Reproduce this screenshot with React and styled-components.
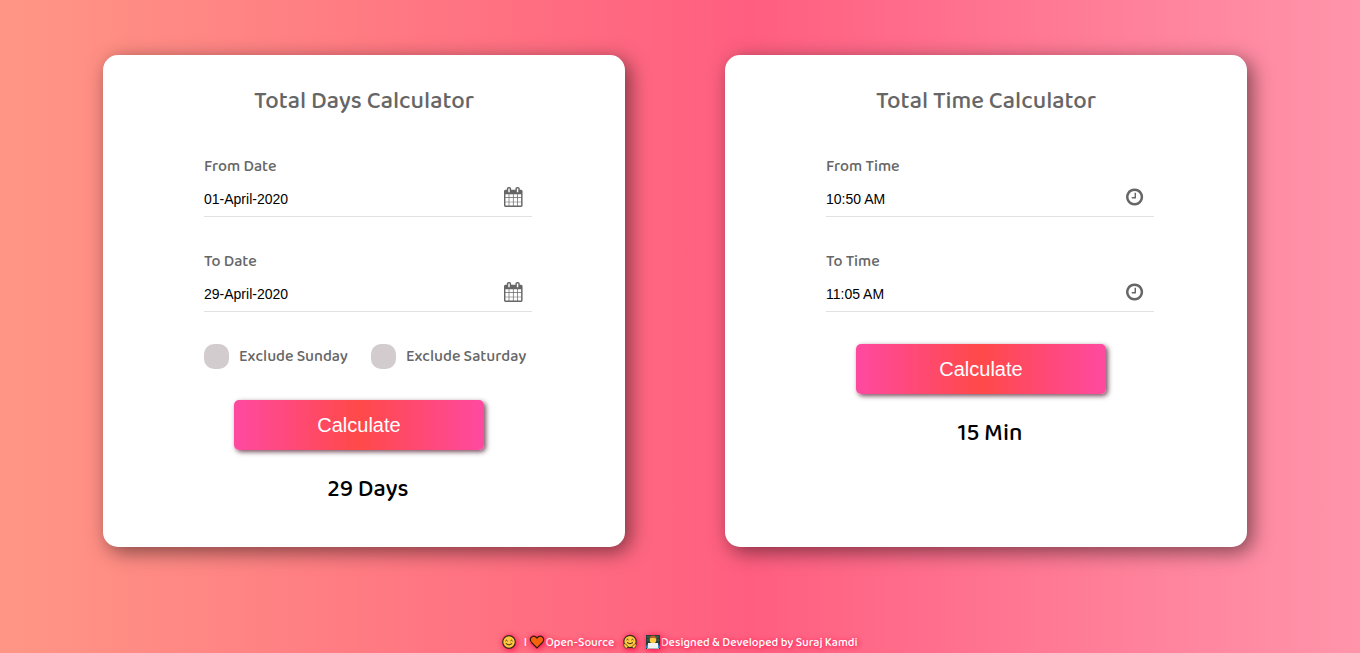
import React, { useState } from "react";
import styled, { createGlobalStyle } from "styled-components";

const GlobalStyle = createGlobalStyle`
  * { box-sizing: border-box; }
  body {
    margin: 0;
    background: linear-gradient(to right, #ff9685, #ff5e80 55%, #ff95aa);
    font-family: "Baloo 2", "Noto Sans", sans-serif;
    font-weight: 500;
    color: #666;
  }
`;

const Page = styled.div`
  display: flex;
  flex-direction: column;
  min-height: 100vh;
  padding: 55px 10px 0 0;
`;

const Cards = styled.main`
  display: flex;
  justify-content: center;
  gap: 100px;
`;

const Card = styled.section`
  flex: 0 1 522px;
  min-height: 492px;
  padding: 30px 0;
  border-radius: 15px;
  background: #fff;
  box-shadow: 5px 5px 20px rgba(0, 0, 0, 0.5);
`;

const Title = styled.h1`
  margin: 0 0 38px;
  font-size: 24px;
  font-weight: 500;
  line-height: 34px;
  text-align: center;
`;

const Form = styled.form`
  width: 336px;
  max-width: 100%;
  margin: 0 auto;
  padding-left: 8px;
`;

const Fields = styled.div`
  display: flex;
  flex-direction: column;
  gap: 35px;
  margin-bottom: 32px;
`;

const Field = styled.div`
  display: flex;
  flex-direction: column;
`;

const Label = styled.label`
  font-size: 16px;
  line-height: 20px;
`;

const InputRow = styled.div`
  display: flex;
  align-items: center;
  height: 40px;
  padding: 0 9px 0 0;
  border-bottom: 1px solid #e1e1e1;
`;

const TextInput = styled.input`
  flex: 1;
  min-width: 0;
  padding: 4px 0 0;
  border: 0;
  outline: 0;
  background: none;
  color: #000;
  font: 14px "Liberation Sans", Arial, sans-serif;
`;

const Icon = styled.svg`
  height: 20px;
  fill: #666;
`;

const Checks = styled.div`
  display: flex;
  gap: 23px;
  margin-bottom: 31px;
`;

const CheckLabel = styled.label`
  display: flex;
  align-items: center;
  gap: 10px;
  font-size: 16px;
  line-height: 25px;
  white-space: nowrap;
`;

const CheckBox = styled.input`
  appearance: none;
  width: 25px;
  height: 25px;
  margin: 0;
  border-radius: 10px;
  background: #d3cccf;
  &:checked { background: #ff4b8b; }
`;

const Button = styled.button`
  display: block;
  width: 250px;
  height: 50px;
  margin: 0 0 22px 30px;
  padding: 0;
  border: 0;
  border-radius: 5px;
  background: linear-gradient(to right, #ff49a1, #ff4949, #ff49a1);
  box-shadow: 2px 2px 5px rgba(60, 0, 20, 0.7);
  color: #fff;
  font: 20px "Liberation Sans", Arial, sans-serif;
`;

const Result = styled.output`
  display: block;
  color: #000;
  font-size: 24px;
  line-height: 36px;
  text-align: center;
`;

const Footer = styled.footer`
  display: flex;
  justify-content: center;
  align-items: center;
  height: 22px;
  margin-top: auto;
  padding-left: 8px;
  color: #fff;
  font-size: 12px;
  text-shadow: 1px 1px 5px #f04;
  white-space: pre;
`;

const Emoji = styled.svg`
  width: 16px;
  height: 16px;
  filter: drop-shadow(1px 1px 3px #f04);
`;

const Calendar = () => (
  <Icon viewBox="0 0 1664 1792" aria-hidden="true">
    <path d="M128 1664h288v-288h-288v288zM480 1664h320v-288h-320v288zM128 1312h288v-320h-288v320zM480 1312h320v-320h-320v320zM128 928h288v-288h-288v288zM864 1664h320v-288h-320v288zM480 928h320v-288h-320v288zM1248 1664h288v-288h-288v288zM864 1312h320v-320h-320v320zM512 448v-288q0-13-9.5-22.5t-22.5-9.5h-64q-13 0-22.5 9.5t-9.5 22.5v288q0 13 9.5 22.5t22.5 9.5h64q13 0 22.5-9.5t9.5-22.5zM1248 1312h288v-320h-288v320zM864 928h320v-288h-320v288zM1248 928h288v-288h-288v288zM1280 448v-288q0-13-9.5-22.5t-22.5-9.5h-64q-13 0-22.5 9.5t-9.5 22.5v288q0 13 9.5 22.5t22.5 9.5h64q13 0 22.5-9.5t9.5-22.5zM1664 384v1280q0 52-38 90t-90 38h-1408q-52 0-90-38t-38-90v-1280q0-52 38-90t90-38h128v-96q0-66 47-113t113-47h64q66 0 113 47t47 113v96h384v-96q0-66 47-113t113-47h64q66 0 113 47t47 113v96h128q52 0 90 38t38 90z" />
  </Icon>
);

const Clock = () => (
  <Icon viewBox="0 0 1664 1792" aria-hidden="true">
    <path d="M896 544v448q0 14-9 23t-23 9h-320q-14 0-23-9t-9-23v-64q0-14 9-23t23-9h224v-352q0-14 9-23t23-9h64q14 0 23 9t9 23zM1312 896q0-148-73-273t-198-198-273-73-273 73-198 198-73 273 73 273 198 198 273 73 273-73 198-198 73-273zM1536 896q0 209-103 385.5t-279.5 279.5-385.5 103-385.5-103-279.5-279.5-103-385.5 103-385.5 279.5-279.5 385.5-103 385.5 103 279.5 279.5 103 385.5z" />
  </Icon>
);

const Smile = () => (
  <Emoji viewBox="0 0 16 16" role="img" aria-label="smiling face">
    <circle cx="8" cy="8" r="6.3" fill="#ffc83d" stroke="#3a2a20" strokeWidth="1.2" />
    <path d="M4.5 7q1-1.6 2 0M9.500 7q1-1.6 2 0M4.800 9.500q3.200 3 6.400 0" fill="none" stroke="#3a2a20" />
  </Emoji>
);

const Hug = () => (
  <Emoji viewBox="0 0 16 16" role="img" aria-label="hugging face">
    <circle cx="8" cy="7.500" r="6.200" fill="#ffc83d" stroke="#3a2a20" strokeWidth="1.2" />
    <path d="M4.500 6q1-1.500 2 0M9.500 6q1-1.500 2 0M5 8.500q3 2.600 6 0" fill="none" stroke="#3a2a20" />
    <path d="M1.500 10.500l1.500-1 3 3-1 2q-3 0-3.500-4zM14.500 10.500l-1.500-1-3 3 1 2q3 0 3.500-4z" fill="#ffc83d" stroke="#3a2a20" strokeWidth=".7" />
  </Emoji>
);

const Heart = () => (
  <Emoji viewBox="0 0 16 16" role="img" aria-label="love">
    <path d="M8 14L2.500 8.500Q.2 5.500 2.300 3.200Q5.300.8 8 4Q10.700.8 13.700 3.200Q15.800 5.500 13.500 8.500Z" fill="#f7630c" stroke="#3a1a10" strokeWidth="1.200" />
  </Emoji>
);

const Coder = () => (
  <Emoji viewBox="0 0 16 16" role="img" aria-label="developer">
    <path d="M1 1h14v14H1z" fill="#263f3a" />
    <path d="M2 3h3M2 6h2M11 3h3M12 6h2" stroke="#3c7a58" />
    <circle cx="8" cy="6" r="3.300" fill="#ffc83d" />
    <path d="M4.500 5Q4.500 1.500 8 1.500T11.500 5L10 4H6Z" fill="#b3622b" />
    <path d="M1 14q0-5 7-5t7 5z" fill="#2f8fd0" />
    <path d="M3 9h10v5H3z" fill="#eef2f4" />
    <path d="M2 14.500h12" stroke="#a9b4bb" />
  </Emoji>
);

function Entry({ id, label, initial, icon }) {
  const [value, setValue] = useState(initial);
  return (
    <Field>
      <Label htmlFor={id}>{label}</Label>
      <InputRow>
        <TextInput id={id} value={value} onChange={(e) => setValue(e.target.value)} />
        {icon}
      </InputRow>
    </Field>
  );
}

export default function App() {
  return (
    <>
      <GlobalStyle />
      <Page>
        <Cards>
          <Card>
            <Title>Total Days Calculator</Title>
            <Form>
              <Fields>
                <Entry id="from-date" label="From Date" initial="01-April-2020" icon={<Calendar />} />
                <Entry id="to-date" label="To Date" initial="29-April-2020" icon={<Calendar />} />
              </Fields>
              <Checks>
                <CheckLabel><CheckBox type="checkbox" />Exclude Sunday</CheckLabel>
                <CheckLabel><CheckBox type="checkbox" />Exclude Saturday</CheckLabel>
              </Checks>
              <Button type="button">Calculate</Button>
              <Result>29 Days</Result>
            </Form>
          </Card>
          <Card>
            <Title>Total Time Calculator</Title>
            <Form>
              <Fields>
                <Entry id="from-time" label="From Time" initial="10:50 AM" icon={<Clock />} />
                <Entry id="to-time" label="To Time" initial="11:05 AM" icon={<Clock />} />
              </Fields>
              <Button type="button">Calculate</Button>
              <Result>15 Min</Result>
            </Form>
          </Card>
        </Cards>
        <Footer>
          <Smile /><span>{"   I "}</span><Heart /><span>{"Open-Source   "}</span><Hug /><span>{"   "}</span><Coder /><span>Designed &amp; Developed by Suraj Kamdi</span>
        </Footer>
      </Page>
    </>
  );
}
